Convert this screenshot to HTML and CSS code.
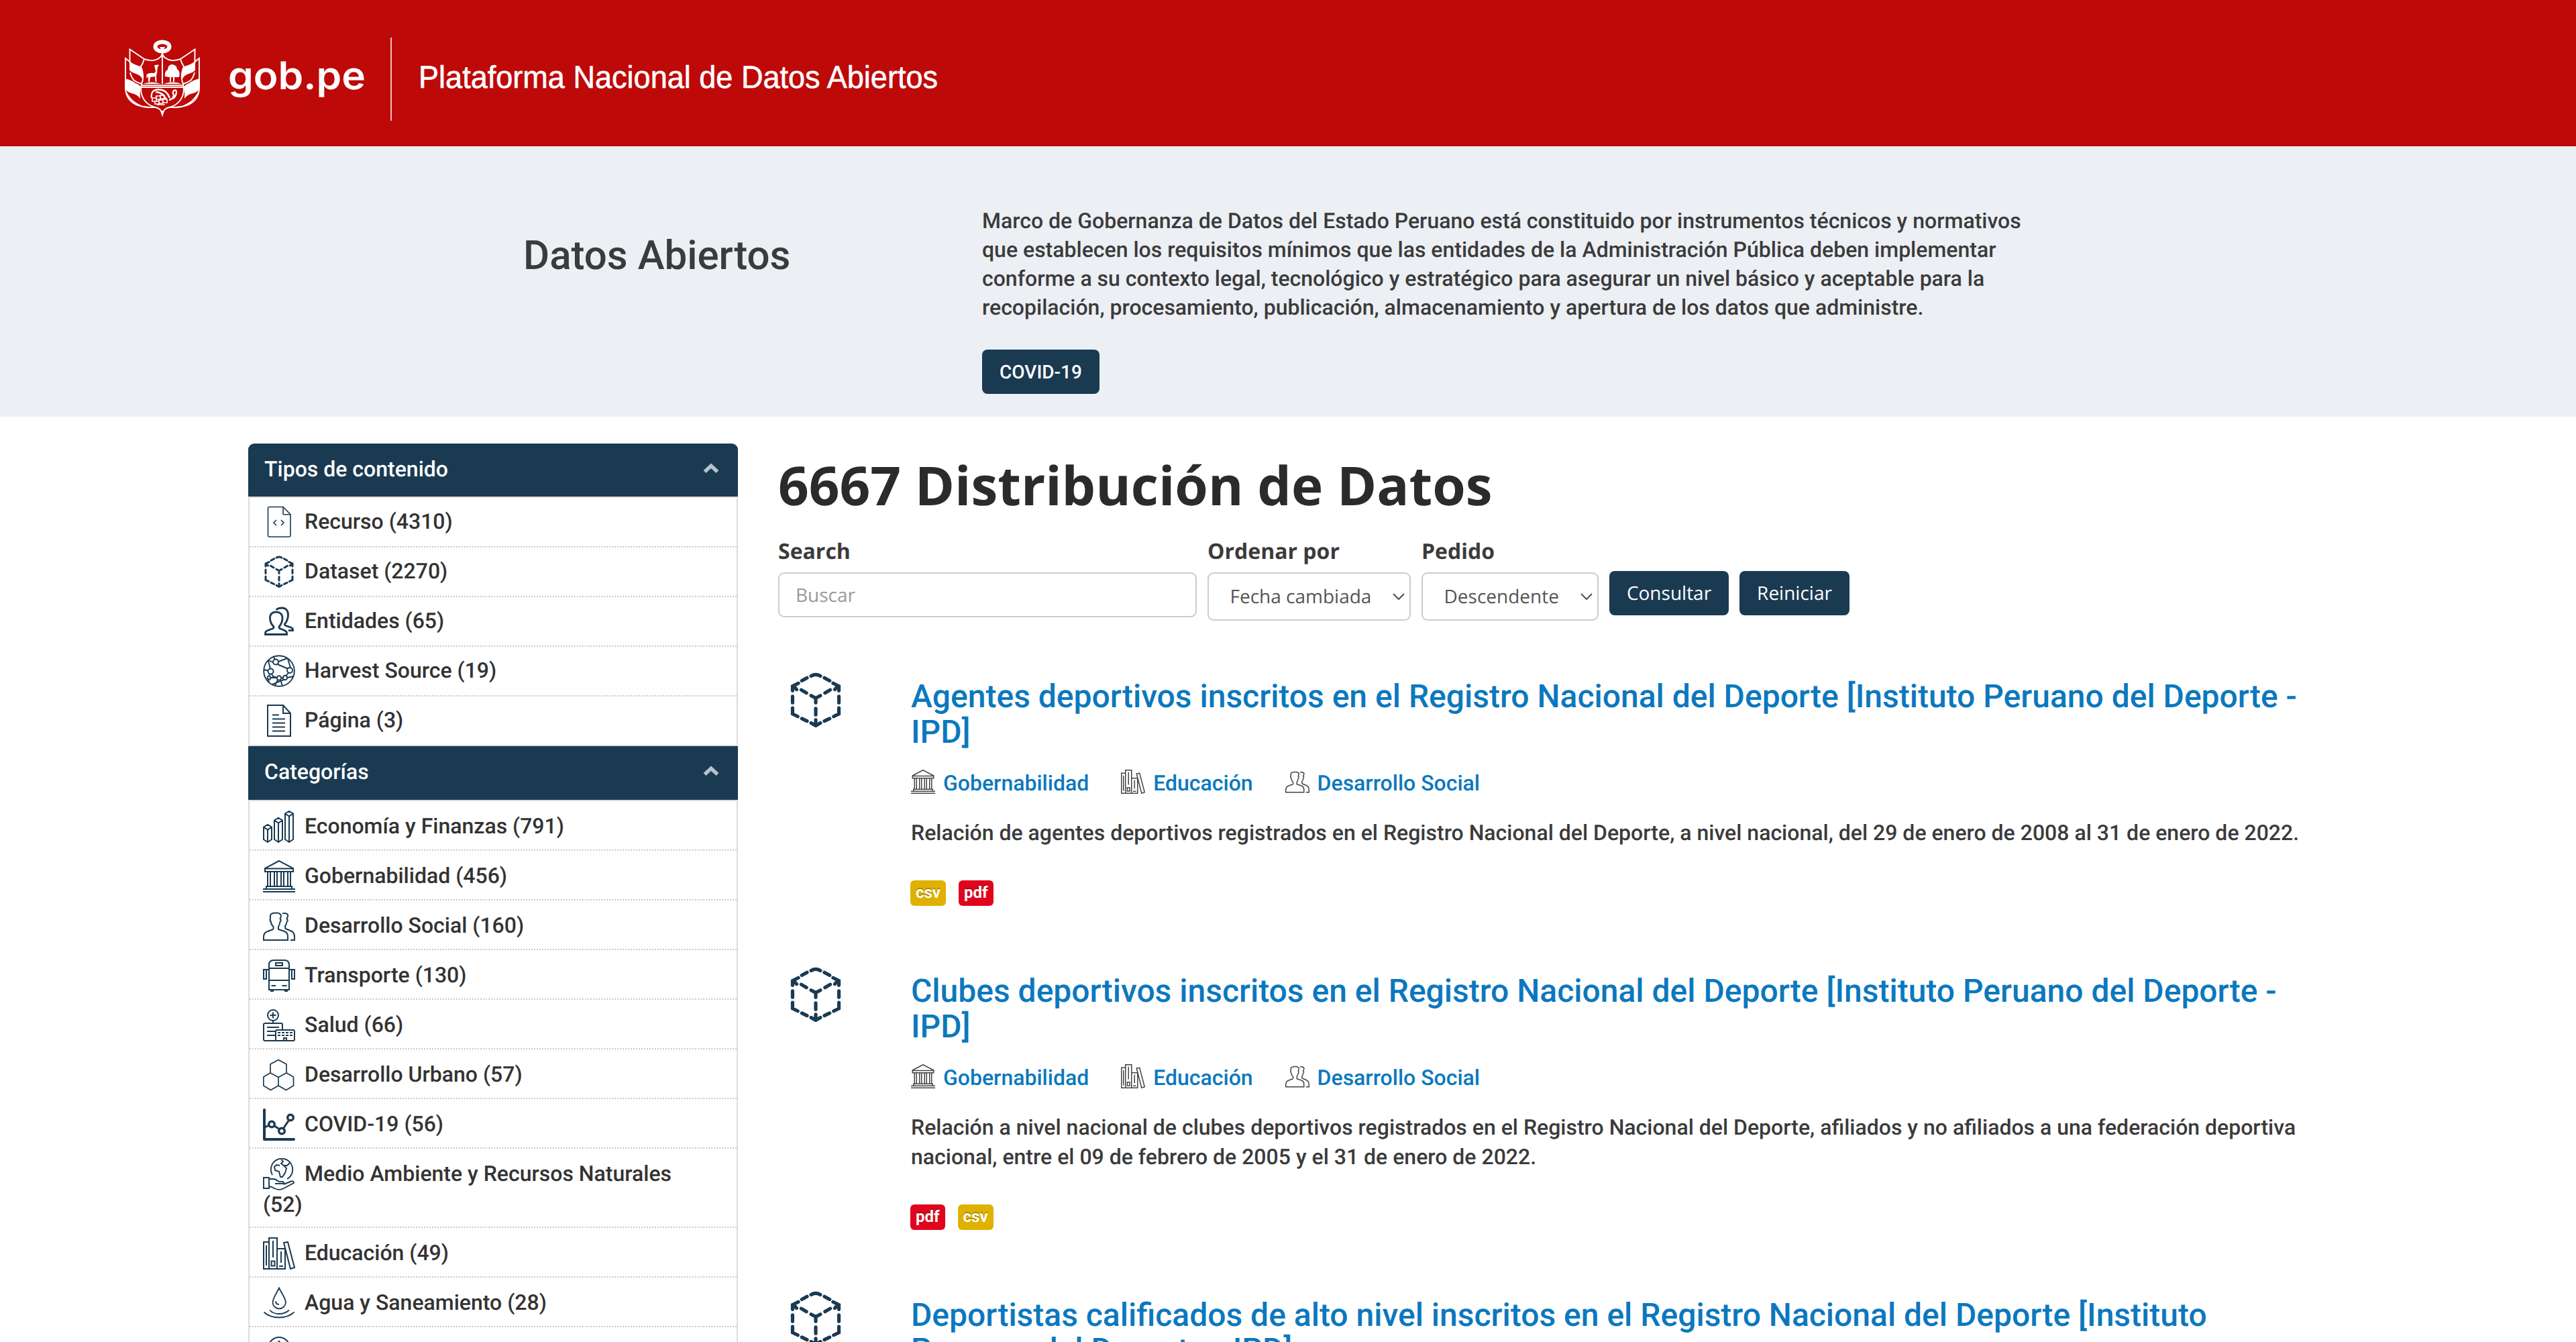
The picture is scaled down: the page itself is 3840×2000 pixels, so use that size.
FILE: index.html
```html
<!DOCTYPE html>
<html lang="es">
<head>
<meta charset="utf-8">
<title>Plataforma Nacional de Datos Abiertos</title>
<link rel="stylesheet" href="styles.css">
</head>
<body>
<svg class="sprite" aria-hidden="true">
  <symbol id="i-code" viewBox="0 0 48 48"><path stroke-width="1.6" d="M9.500 1.500H30L41 12.500V44a2 2 0 0 1-2 2H9.500a2 2 0 0 1-2-2V3.500a2 2 0 0 1 2-2zM30 1.500V12a1 1 0 0 0 1 .8H41M20 21l-4 4 4 4M27 21l4 4-4 4"/></symbol>
  <symbol id="i-cube" viewBox="0 0 48 48"><path stroke-width="3" stroke-linecap="round" d="M20 3.200Q24 .8 28 3.200M12 7.300L16.500 4.800M36 7.300L31.500 4.800M9 9.500L4 12V16M39 9.500L44 12V16M5 12L7.500 15M43 12L40.500 15M11.500 15.300L16 18M36.500 15.300L32 18M20 20.300L24 22.500L28 20.300M24 22.500V26.500M24 31.500V37M4 21V26.500M44 21V26.500M4 31V36.300L8.500 38.500M44 31V36.300L39.500 38.500M12 40.300L16.500 42.500M36 40.300L31.500 42.500M24 41.500V46M20 44.200L24 46.500L28 44.200"/></symbol>
  <symbol id="i-users" viewBox="0 0 48 48"><path stroke-width="2.800" stroke-linecap="round" d="M16 32C12 28 10.500 23 10.500 19C10.500 13 14 10 19.500 10S29 13 29 19C29 23 27.500 28 24 32Q23.500 34 26 35L32 37.500Q35.500 39 35.500 41.500V43.500H3.500V41.500Q3.500 39 7 37.500L14 35Q16.500 34 16 32zM20.500 6C23 4.500 26 4 28 4C34 4 37.500 8 37.500 14C37.500 19 36 24 32.500 28Q32 29.500 34 30.500L40 32.500Q44.500 34 44.500 36V37.700H39"/></symbol>
  <symbol id="i-network" viewBox="0 0 48 48"><g stroke-width="1.900"><circle cx="24" cy="24" r="22.800"/><circle cx="19" cy="10.500" r="4"/><circle cx="40" cy="23" r="4"/><circle cx="11.500" cy="24.500" r="4"/><circle cx="24" cy="34.500" r="3.200"/><circle cx="33" cy="34" r="3.200"/><circle cx="9" cy="34" r="2.400"/><path d="M15.500 1.800 17.500 6.800M15 11 8 8M23 10 36 5M21.500 14 37 20.500M41 19 37 6M8 9 11 20.500M7.500 23.500 1.500 22M13 28.500 15 32 21 34M10 28.500 9 31.500M11.500 34H21M27 34.500H30M36 34 45 32M34.500 31 38 26.500M22 37 18 46M26 37 29 46M31 37 14 44M8 36.500 9 40"/></g></symbol>
  <symbol id="i-page" viewBox="0 0 48 48"><path d="M7 1H30L41 13V47H7zM30 1V13H41M14 15.500H24M14 21.500H33M14 27.500H33M14 33.500H33M14 39.500H33"/></symbol>
  <symbol id="i-bars" viewBox="0 0 48 48"><path d="M1 24.500 7 21l6 3.500V43l-6 4-6-4zM1 24.500 7 28.500l6-4M7 28.500V47M17 14.500 23 11l6 3.500V43l-6 4-6-4zM17 14.500l6 4 6-4M23 18.500V47M33 4.500 39 1l6 3.500V43l-6 4-6-4zM33 4.500l6 4 6-4M39 8.500V47"/></symbol>
  <symbol id="i-temple" viewBox="0 0 48 48"><path d="M24 1 3 12V17H45V12zM3 12.500H45M7 17V38M11 17V38M17 17V38M21 17V38M27 17V38M31 17V38M37 17V38M41 17V38M5 42V39H43V42M0 43H48M0 47H48"/></symbol>
  <symbol id="i-social" viewBox="0 0 48 48"><path d="M1 45V40C1 35 4 33 7 32L15 29Q16 28.500 15.500 25Q12 22 12 18Q9.500 15 11 13V8C12 5 16 4.500 20 4.500C25 4.500 27.500 7 27 10L25.500 13Q28 16 25.500 18Q25 22 23 25V29L32 32C36 33.500 37 36 37 40V45zM29 5.500C34 4 38 6 37 10L35.500 13Q38 16 35.500 18Q35 22 33 24L33.500 28L41 31C46 33 47 36 47 40V45H41"/></symbol>
  <symbol id="i-bus" viewBox="0 0 48 48"><path d="M9 45V8Q9 1 16 1H32Q39 1 39 8V45zM9 13H39M9 31H39M19 5H29V9H19zM12.500 39H19M28.500 39H35.500M9 15H1V29H5V15M39 15H47V29H43V15M11 47H16M32 47H37"/></symbol>
  <symbol id="i-health" viewBox="0 0 48 48"><path d="M15 17V21M15 4.500V13.500M10.500 9H19.500M6 27H24M6 33H18M6 39H18M19 47H3Q1 47 1 45V23Q1 21 3 21H27Q29 21 29 23V30"/><circle cx="15" cy="9" r="8"/><path d="M21 31H45Q47 31 47 33V45Q47 47 45 47H19V33Q19 31 21 31zM31 47V43H35V47"/><path stroke-dasharray="4 2" d="M22 35H44M22 39H44"/></symbol>
  <symbol id="i-hex" viewBox="0 0 48 48"><path stroke-width="1.700" d="M23 1.500 35 8V21L23 27.500 11 21V8zM11 21 .8 27V40L11.500 46.500 23 40V27.500M35 21 45.500 27V40L34.500 46.500 23 40"/></symbol>
  <symbol id="i-chart" viewBox="0 0 48 48"><path stroke-width="4" stroke-linecap="round" stroke-linejoin="round" d="M2 2V46H46"/><path stroke-width="3" d="M3 28 9 25M17 26 25 31M30.500 29.500 39 17"/><g stroke-width="3.400"><circle cx="13" cy="23.500" r="4.300"/><circle cx="28" cy="33.500" r="4.300"/><circle cx="41" cy="13.500" r="4.300"/></g></symbol>
  <symbol id="i-earth" viewBox="0 0 48 48"><g stroke-width="1.900"><path d="M14 25A16.200 16.200 0 1 1 36 31M1 29H9V45H1zM9 31H15Q19 31 22 34Q24 35.500 29 35Q32 35.500 31 38H18M9 42Q14 43 18 45.500Q25 48.500 31 45L46 37Q46 33.500 42 34.500L31 39"/><path d="M27 1.500 30 5 27 8 31 11H36L40 7M31 11 35 15 33 22 29 28H26L24 20 18 18 17 13 20 10 25 11"/></g></symbol>
  <symbol id="i-books" viewBox="0 0 48 48"><path d="M9 7H1V47H33V17H21M9 47V1H21V47M5 12V42M15 5V30M12.500 35.500H17.500V42.500H12.500zM27 21V38M24 43H30M31 8 37 7 47 45 41 47z"/></symbol>
  <symbol id="i-water" viewBox="0 0 48 48"><path stroke-width="1.800" d="M24 1.500C20 10 14.500 17 14.500 23.500A9.800 9.800 0 0 0 34 23.500C34 17 28 10 24 1.500zM19 21Q19 26 24 26M1.500 37.500Q10 45.500 24 45.500T46.500 37.500M10 34.500Q15 40 24 40T39 34.500"/></symbol>
  <symbol id="i-clock" viewBox="0 0 48 48"><circle cx="24" cy="17" r="16"/><path stroke-width="3" d="M24 6V17"/></symbol>
  <symbol id="i-up" viewBox="0 0 24 16"><path stroke-width="5.600" d="M2.500 13 12 4.200 21.500 13"/></symbol>
  <symbol id="i-down" viewBox="0 0 18 10"><path stroke-width="2.200" d="M1 1 9 9 17 1"/></symbol>
</svg>

<header class="topbar">
  <svg class="brand" viewBox="180 0 1300 218" role="img" aria-label="gob.pe">
    <g transform="translate(180 50)" fill="none" stroke="#fff" stroke-width="1.900">
      <ellipse cx="62" cy="19.500" rx="10.500" ry="7" stroke-width="6"/>
      <path fill="#fff" stroke="none" d="M58 20h8l-2 4h-4z"/>
      <path d="M62 28V75M30 77.300H94M30 80H94M35 38Q49 43 58 36Q62 33 62 28Q62 33 66 36Q75 43 89 38"/>
      <g id="flag">
        <path d="M35 38Q33 45 30 49Q36 64 31 75Q28 89 35 99Q41 107 50 109.500Q60 111 62 120M13.500 44V23.500L35 38M13.500 42 7 37V82Q8 99 23 106Q36 111 52 110M7 86Q15 102 30 108M14 58Q16 66 20 70Q26 74 31 75"/>
        <path fill="#fff" stroke="none" d="M13 41Q20 47 30 49Q34 57 33 69Q29 61 20 59Q15 57 13 55zM6 67Q16 69 22 74Q28 76 30 80Q28 88 29 97Q24 90 16 89Q9 87 6 82z"/>
      </g>
      <use href="#flag" transform="translate(124 0) scale(-1 1)"/>
      <path fill="#fff" stroke="none" d="M59 115 62 124.500 65 115zM50 47 57 46.500 55 50 54 59 53 63 53.500 72H51.500L51 64 44 65 43 72H41L41 64 38.500 67 38.500 61Q42 58 50 59L52 56zM66 64Q65 56 70 54Q70 47 76 46Q84 47 84 53Q89 56 87 65H80V72H78V65H75V72H73V65zM33 75Q46 70 60 75zM64 75Q78 70 91 75z"/>
      <path stroke-width="2.300" d="M46 96Q44 84 56 83.500Q68 83 73 96M52 87Q62 87 68 98M73 98Q82 97 83 88Q83 83 79 85Q76 89 80 92M72 99Q78 98 79 92"/>
      <path stroke-width="1.700" d="M47 96h6v5h-6zM53 93h6v5h-6zM59 92h6v5h-6zM51 101h6v4h-6zM57 99h6v5h-6zM63 98h6v5h-6zM54 106h12"/>
    </g>
    <text class="brand-gob" x="340" y="133" textLength="205" lengthAdjust="spacingAndGlyphs">gob.pe</text>
    <path d="M583 56V180" stroke="#fff" stroke-opacity=".75" stroke-width="2"/>
    <text class="brand-name" x="624" y="131" textLength="774" lengthAdjust="spacingAndGlyphs">Plataforma Nacional de Datos Abiertos</text>
  </svg>
</header>

<section class="lead">
  <h2 class="lead-title">Datos Abiertos</h2>
  <div class="lead-body">
    <p class="lead-text">Marco de Gobernanza de Datos del Estado Peruano está constituido por instrumentos técnicos y normativos que establecen los requisitos mínimos que las entidades de la Administración Pública deben implementar conforme a su contexto legal, tecnológico y estratégico para asegurar un nivel básico y aceptable para la recopilación, procesamiento, publicación, almacenamiento y apertura de los datos que administre.</p>
    <a class="btn btn-lead">COVID-19</a>
  </div>
</section>

<div class="page">
  <aside class="sidebar">
    <h3 class="facet-head first">Tipos de contenido<svg class="chev"><use href="#i-up"/></svg></h3>
    <ul class="facet types">
      <li><svg class="ico"><use href="#i-code"/></svg>Recurso (4310)</li>
      <li><svg class="ico"><use href="#i-cube"/></svg>Dataset (2270)</li>
      <li><svg class="ico"><use href="#i-users"/></svg>Entidades (65)</li>
      <li><svg class="ico"><use href="#i-network"/></svg>Harvest Source (19)</li>
      <li><svg class="ico"><use href="#i-page"/></svg>Página (3)</li>
    </ul>
    <h3 class="facet-head">Categorías<svg class="chev"><use href="#i-up"/></svg></h3>
    <ul class="facet">
      <li><svg class="ico"><use href="#i-bars"/></svg>Economía y Finanzas (791)</li>
      <li><svg class="ico"><use href="#i-temple"/></svg>Gobernabilidad (456)</li>
      <li><svg class="ico"><use href="#i-social"/></svg>Desarrollo Social (160)</li>
      <li><svg class="ico"><use href="#i-bus"/></svg>Transporte (130)</li>
      <li><svg class="ico"><use href="#i-health"/></svg>Salud (66)</li>
      <li><svg class="ico"><use href="#i-hex"/></svg>Desarrollo Urbano (57)</li>
      <li><svg class="ico"><use href="#i-chart"/></svg>COVID-19 (56)</li>
      <li><svg class="ico"><use href="#i-earth"/></svg>Medio Ambiente y Recursos Naturales (52)</li>
      <li><svg class="ico"><use href="#i-books"/></svg>Educación (49)</li>
      <li><svg class="ico"><use href="#i-water"/></svg>Agua y Saneamiento (28)</li>
      <li><svg class="ico"><use href="#i-clock"/></svg></li>
    </ul>
  </aside>

  <main class="main">
    <h1 class="heading">6667 Distribución de Datos</h1>
    <form class="filters">
      <label class="field search">Search<input class="control" type="text" placeholder="Buscar"></label>
      <div class="field order">Ordenar por<span class="control select">Fecha cambiada<svg class="down"><use href="#i-down"/></svg></span></div>
      <div class="field direction">Pedido<span class="control select">Descendente<svg class="down"><use href="#i-down"/></svg></span></div>
      <button class="btn btn-form" type="button">Consultar</button>
      <button class="btn btn-form reset" type="button">Reiniciar</button>
    </form>

    <article class="result">
      <svg class="cube" viewBox="2 0 44 48" preserveAspectRatio="none"><use href="#i-cube" width="48" height="48"/></svg>
      <div class="result-body">
        <h2 class="result-title">Agentes deportivos inscritos en el Registro Nacional del Deporte [Instituto Peruano del Deporte - IPD]</h2>
        <div class="tags">
          <a class="tag"><svg class="tag-ico"><use href="#i-temple"/></svg>Gobernabilidad</a>
          <a class="tag"><svg class="tag-ico"><use href="#i-books"/></svg>Educación</a>
          <a class="tag"><svg class="tag-ico"><use href="#i-social"/></svg>Desarrollo Social</a>
        </div>
        <p class="result-text">Relación de agentes deportivos registrados en el Registro Nacional del Deporte, a nivel nacional, del 29 de enero de 2008 al 31 de enero de 2022.</p>
        <div class="formats"><span class="label csv">csv</span><span class="label pdf">pdf</span></div>
      </div>
    </article>

    <article class="result">
      <svg class="cube" viewBox="2 0 44 48" preserveAspectRatio="none"><use href="#i-cube" width="48" height="48"/></svg>
      <div class="result-body">
        <h2 class="result-title">Clubes deportivos inscritos en el Registro Nacional del Deporte [Instituto Peruano del Deporte - IPD]</h2>
        <div class="tags">
          <a class="tag"><svg class="tag-ico"><use href="#i-temple"/></svg>Gobernabilidad</a>
          <a class="tag"><svg class="tag-ico"><use href="#i-books"/></svg>Educación</a>
          <a class="tag"><svg class="tag-ico"><use href="#i-social"/></svg>Desarrollo Social</a>
        </div>
        <p class="result-text">Relación a nivel nacional de clubes deportivos registrados en el Registro Nacional del Deporte, afiliados y no afiliados a una federación deportiva nacional, entre el 09 de febrero de 2005 y el 31 de enero de 2022.</p>
        <div class="formats"><span class="label pdf">pdf</span><span class="label csv">csv</span></div>
      </div>
    </article>

    <article class="result">
      <svg class="cube" viewBox="2 0 44 48" preserveAspectRatio="none"><use href="#i-cube" width="48" height="48"/></svg>
      <div class="result-body">
        <h2 class="result-title">Deportistas calificados de alto nivel inscritos en el Registro Nacional del Deporte [Instituto Peruano del Deporte - IPD]</h2>
      </div>
    </article>
  </main>
</div>
</body>
</html>
```
FILE: styles.css
```css
* { box-sizing: border-box; }

html { height: 2000px; overflow: hidden; }

body {
  margin: 0;
  height: 2000px;
  overflow: hidden;
  background: #fff;
  color: #3b3b3b;
  font: 500 32px/43.2px Roboto, sans-serif;
  text-rendering: geometricPrecision;
}

h1, h2, h3, p, ul { margin: 0; padding: 0; font-weight: 500; }
ul { list-style: none; }

symbol { overflow: visible; }
svg { fill: none; stroke-width: 2; }
.sprite { display: none; }

/* Top bar */
.topbar { height: 218px; background: #be0909; padding-left: 180px; }
.brand { display: block; width: 1300px; height: 218px; }
.brand text { fill: #fff; stroke: none; }
.brand-gob { font: 600 57px Inter, sans-serif; }
.brand-name { font: 400 47px "Liberation Sans", sans-serif; }
.brand .brand-name { stroke: #fff; stroke-width: .6; }

/* Introduction */
.lead {
  display: flex;
  height: 403px;
  padding-left: 780px;
  background: #eceff4;
}
.lead-title { width: 684px; padding-top: 129.5px; font-size: 60px; line-height: 66px; }
.lead-body { width: 1566px; padding-top: 89.8px; }
.btn {
  display: flex;
  align-items: center;
  justify-content: center;
  height: 66px;
  padding: 0;
  border: 0;
  border-radius: 8px;
  background: #1a3a52;
  color: #fff;
  font: 500 28px Roboto, sans-serif;
  text-rendering: inherit;
}
.btn-lead { width: 175px; margin-top: 40.4px; }

/* Page columns */
.page { display: flex; gap: 60px; padding: 40px 370px 0; }
.sidebar { flex: none; width: 730px; }
.main { width: 2310px; flex: none; font-family: "Open Sans", sans-serif; }

/* Facets */
.facet-head {
  display: flex;
  justify-content: space-between;
  height: 80px;
  padding: 0 28px 0 24px;
  background: #1a3a52;
  color: #fff;
  font-size: 32px;
  line-height: 76px;
}
.facet-head.first { height: 79px; border-radius: 9px 9px 0 0; }
.chev { width: 24px; height: 16px; margin-top: 29px; stroke: #b8c2ca; }
.facet { border: 2px solid #ddd; color: #333; line-height: 46px; }
.facet li { min-height: 74px; padding: 14px 40px 10px 20px; border-bottom: 2px dotted #ccc; }
.facet li:last-child { min-height: 72px; border-bottom: 0; }
.facet.types li { padding-top: 12px; }
.ico {
  width: 48px;
  height: 48px;
  margin: -10px 14px -10px 0;
  vertical-align: -4px;
  stroke: #1a3a52;
}

/* Filters */
.heading { padding-top: 17.5px; font-size: 80px; font-weight: 700; line-height: 88px; color: #2c2a2b; }
.filters { display: flex; gap: 16px; margin-top: 32px; height: 126.5px; }
.field { display: block; font-size: 32px; font-weight: 700; line-height: 46px; }
.search { width: 624px; }
.order { width: 303px; }
.direction { width: 264px; }
.control {
  display: block;
  width: 100%;
  height: 67px;
  margin-top: 8.5px;
  padding: 0 24px;
  border: 2px solid #ccc;
  border-radius: 9px;
  background: #fff;
  color: #555;
  font: 400 28px "Open Sans", sans-serif;
  text-rendering: inherit;
}
.control::placeholder { color: #999; opacity: 1; }
.select {
  display: flex;
  align-items: center;
  justify-content: space-between;
  height: 72px;
  padding: 0 7px 0 31.5px;
}
.down { width: 18px; height: 10px; stroke: #555; }
.btn-form { width: 178px; margin-top: 52.5px; font-family: "Open Sans", sans-serif; font-weight: 400; }
.reset { width: 164px; }

/* Results */
.filters + .result { margin-top: 77px; }
.result {
  display: flex;
  gap: 104px;
  margin-bottom: 91px;
  padding-left: 18px;
  font-family: Roboto, sans-serif;
}
.cube { flex: none; width: 76px; height: 82px; stroke: #1a3a52; }
.result-body { flex: 1; padding-top: 10px; }
.result-title { font-size: 48px; line-height: 52.8px; color: #0b78be; }
.tags { display: flex; gap: 48px; margin-top: 28px; color: #0b78be; }
.tag { display: flex; gap: 12px; }
.tag-ico { width: 36px; height: 36px; margin-top: 1.6px; stroke: #444; }
.result-text { margin-top: 31.5px; }
.formats { display: flex; gap: 19px; margin: 48.7px 0 0 -1px; }
.label {
  height: 38px;
  padding: 0 8px;
  border-radius: 6px;
  color: #fff;
  font-size: 24px;
  font-weight: 700;
  line-height: 36px;
  text-shadow: 0 -2px 0 rgba(0, 0, 0, .25);
}
.csv { background: #dfb100; }
.pdf { background: #e0051d; }
```
